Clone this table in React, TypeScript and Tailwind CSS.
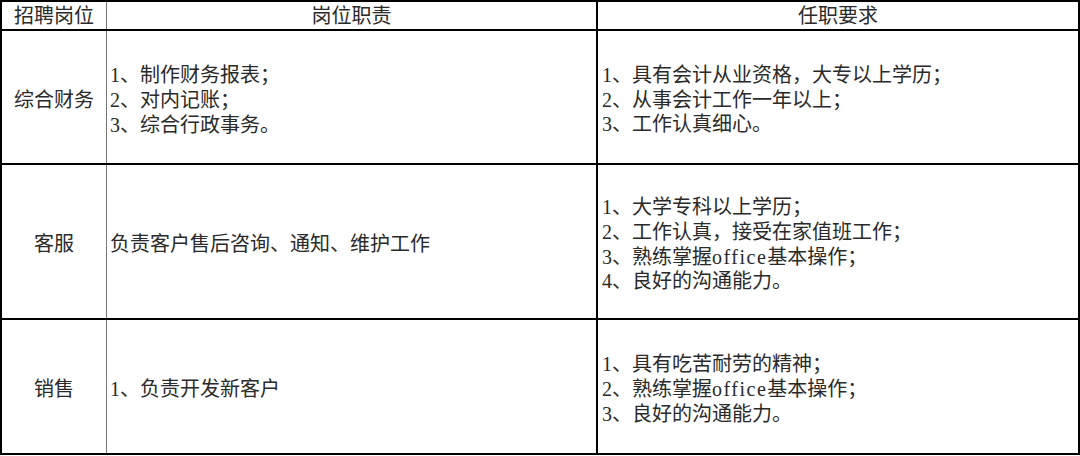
import React from "react";

const font = {
  fontFamily: '"Liberation Serif", "Noto Sans CJK SC", serif',
};

function Off() {
  return <span className="tracking-[1.5px]">office</span>;
}

type Row = {
  title: string;
  h: string;
  duties: React.ReactNode[];
  reqs: React.ReactNode[];
  border: boolean;
};

const rows: Row[] = [
  {
    title: "综合财务",
    h: "h-[134px] border-b-2 border-black",
    duties: ["1、制作财务报表；", "2、对内记账；", "3、综合行政事务。"],
    reqs: ["1、具有会计从业资格，大专以上学历；", "2、从事会计工作一年以上；", "3、工作认真细心。"],
    border: true,
  },
  {
    title: "客服",
    h: "h-[155px] border-b-2 border-black",
    duties: ["负责客户售后咨询、通知、维护工作"],
    reqs: [
      "1、大学专科以上学历；",
      "2、工作认真，接受在家值班工作；",
      <>3、熟练掌握<Off />基本操作；</>,
      "4、良好的沟通能力。",
    ],
    border: true,
  },
  {
    title: "销售",
    h: "h-[133px]",
    duties: ["1、负责开发新客户"],
    reqs: ["1、具有吃苦耐劳的精神；", <>2、熟练掌握<Off />基本操作；</>, "3、良好的沟通能力。"],
    border: false,
  },
];

export default function App() {
  return (
    <div className="w-[1080px] h-[456px] bg-white text-[#2a2a2a] text-[20px]" style={font}>
      <div className="w-[1080px] h-[455px] border-2 border-black flex flex-col">
        <div className="flex h-[29px] border-b-2 border-black leading-[25px]">
          <div className="w-[105px] border-r border-[#777] flex items-center justify-center pt-[1px]">招聘岗位</div>
          <div className="w-[491px] border-r-2 border-black flex items-center justify-center pt-[1px]">岗位职责</div>
          <div className="flex-1 flex items-center justify-center pt-[1px]">任职要求</div>
        </div>
        {rows.map((r, i) => (
          <div key={i} className={`flex ${r.h}`}>
            <div className="w-[105px] border-r border-[#777] flex items-center justify-center leading-[25px] pt-[6px]">
              {r.title}
            </div>
            <div className="w-[491px] border-r-2 border-black flex flex-col justify-center pl-[3px] leading-[25px] pt-[6px]">
              {r.duties.map((d, j) => (
                <div key={j} className="whitespace-nowrap">{d}</div>
              ))}
            </div>
            <div className="flex-1 flex flex-col justify-center pl-[4px] leading-[24.8px] pt-[6px]">
              {r.reqs.map((d, j) => (
                <div key={j} className="whitespace-nowrap">{d}</div>
              ))}
            </div>
          </div>
        ))}
      </div>
    </div>
  );
}
